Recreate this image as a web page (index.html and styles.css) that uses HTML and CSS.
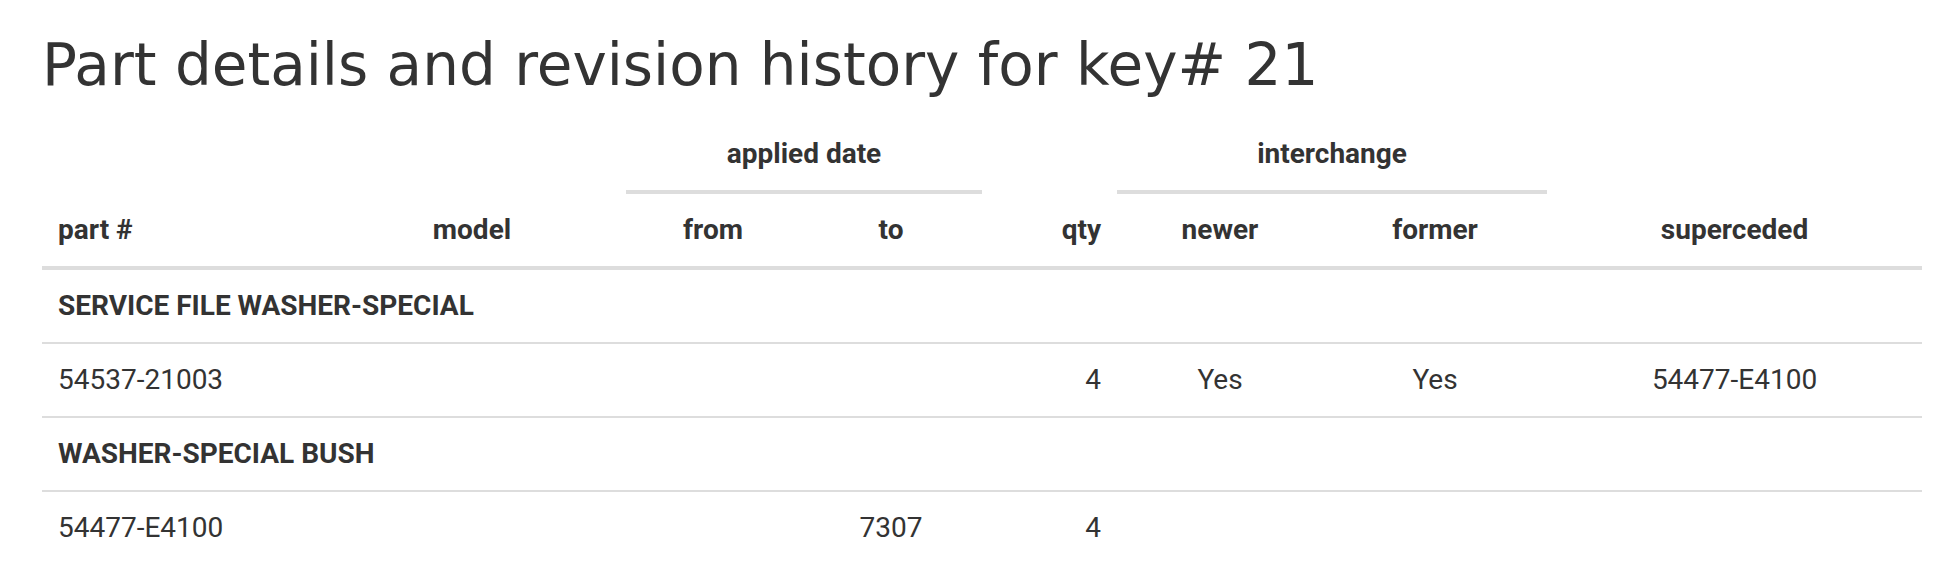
FILE: index.html
```html
<!DOCTYPE html>
<html lang="en">
<head>
<meta charset="utf-8">
<title>Part details</title>
<link rel="stylesheet" href="styles.css">
</head>
<body>
<main class="page">
  <h1 class="title">Part details and revision history for key# 21</h1>
  <table class="parts">
    <colgroup>
      <col class="c-part"><col class="c-model"><col class="c-from"><col class="c-to"><col class="c-qty"><col class="c-newer"><col class="c-former"><col class="c-super">
    </colgroup>
    <thead>
      <tr class="group-row">
        <th></th>
        <th></th>
        <th colspan="2" class="group">applied date</th>
        <th></th>
        <th colspan="2" class="group">interchange</th>
        <th></th>
      </tr>
      <tr class="head-row">
        <th class="left">part #</th>
        <th>model</th>
        <th>from</th>
        <th>to</th>
        <th class="right">qty</th>
        <th>newer</th>
        <th>former</th>
        <th>superceded</th>
      </tr>
    </thead>
    <tbody>
      <tr class="section">
        <td colspan="8">SERVICE FILE WASHER-SPECIAL</td>
      </tr>
      <tr class="item">
        <td class="left">54537-21003</td>
        <td></td>
        <td></td>
        <td></td>
        <td class="right">4</td>
        <td>Yes</td>
        <td>Yes</td>
        <td>54477-E4100</td>
      </tr>
      <tr class="section">
        <td colspan="8">WASHER-SPECIAL BUSH</td>
      </tr>
      <tr class="item">
        <td class="left">54477-E4100</td>
        <td></td>
        <td></td>
        <td>7307</td>
        <td class="right">4</td>
        <td></td>
        <td></td>
        <td></td>
      </tr>
    </tbody>
  </table>
</main>
</body>
</html>
```

FILE: styles.css
```css
html, body {
  margin: 0;
  padding: 0;
  background: #fff;
}

.page {
  padding: 0 22px 0 42px;
  color: #333;
}

.title {
  font-family: "DejaVu Sans", sans-serif;
  font-weight: 400;
  font-size: 58px;
  line-height: 70px;
  margin: 30px 0 18px 0;
  color: #333;
}

.parts {
  width: 1880px;
  border-collapse: collapse;
  table-layout: fixed;
  font-family: Roboto, "Liberation Sans", sans-serif;
  color: #333;
}

.c-part { width: 276px; }
.c-model { width: 308px; }
.c-from { width: 174px; }
.c-to { width: 182px; }
.c-qty { width: 135px; }
.c-newer { width: 206px; }
.c-former { width: 224px; }
.c-super { width: 375px; }

.parts th,
.parts td {
  padding: 16px 16px;
  line-height: 40px;
  font-size: 28px;
  text-align: center;
  vertical-align: middle;
}

.parts th {
  font-weight: 700;
}

.group-row th {
  border-bottom: 4px solid transparent;
}

.group-row th.group {
  border-bottom: 4px solid #ddd;
}

.head-row th {
  border-bottom: 4px solid #ddd;
}

.parts td {
  font-weight: 400;
  border-top: 2px solid #ddd;
}

.parts .left { text-align: left; }
.parts .right { text-align: right; }

.section td {
  text-align: left;
  font-weight: 700;
}
```
